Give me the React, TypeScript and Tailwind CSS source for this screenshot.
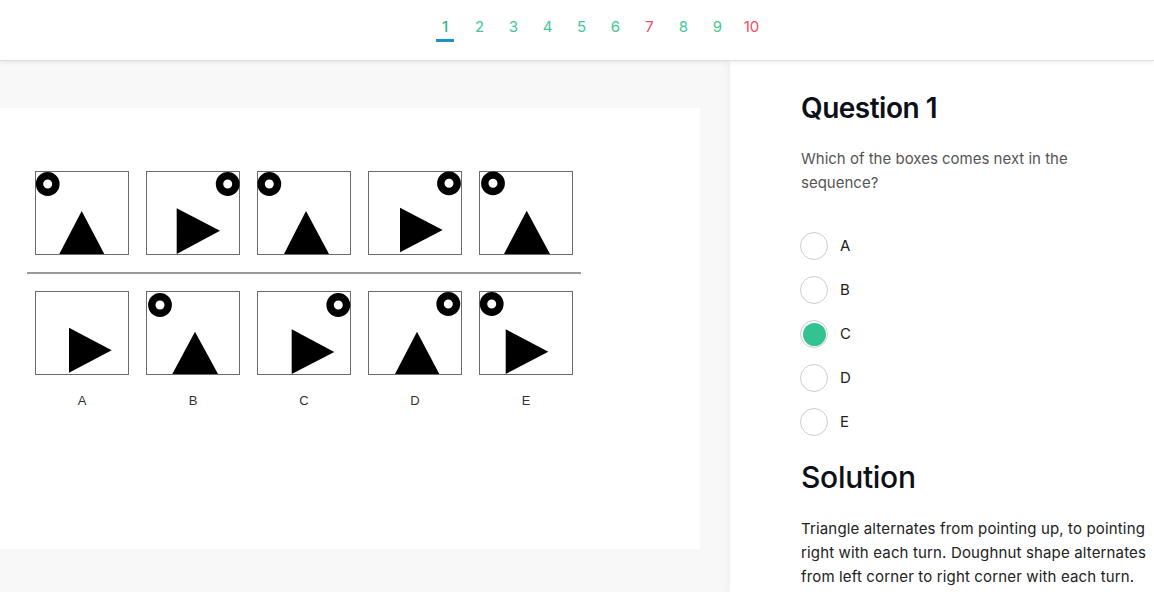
import React from 'react';

type Cell = {
    label?: string;
    donut?: [number, number];
    tri: number[][];
};

const topRow: Cell[] = [
    { donut: [12.7, 13], tri: [[46.7, 40], [69.3, 83], [24.3, 83]] },
    { donut: [81.7, 13], tri: [[30.7, 37.3], [74, 59.7], [30.7, 83]] },
    { donut: [12.3, 13], tri: [[49, 40], [72, 83], [27, 83]] },
    { donut: [81, 12.3], tri: [[32, 36.7], [74.7, 59], [32, 81.3]] },
    { donut: [14, 12.3], tri: [[47.7, 39.7], [71, 83], [25, 83]] },
];

const answers: Cell[] = [
    { label: 'A', tri: [[34, 36.7], [76.7, 59.3], [34, 81.7]] },
    { label: 'B', donut: [14, 14], tri: [[49, 40.7], [72, 83], [26.3, 83]] },
    { label: 'C', donut: [81.3, 14], tri: [[34.7, 38.3], [77.3, 61], [34.7, 83]] },
    { label: 'D', donut: [80.3, 13], tri: [[49, 40.7], [71.3, 83], [27, 83]] },
    { label: 'E', donut: [12.7, 13], tri: [[26.7, 38.3], [69.3, 60.7], [26.7, 83]] },
];

const pages = [
    { n: 1, red: false },
    { n: 2, red: false },
    { n: 3, red: false },
    { n: 4, red: false },
    { n: 5, red: false },
    { n: 6, red: false },
    { n: 7, red: true },
    { n: 8, red: false },
    { n: 9, red: false },
    { n: 10, red: true },
];

function Box({ cell }: { cell: Cell }) {
    return (
        <svg width={94} height={84} viewBox="0 0 94 84" className="block overflow-visible">
            <rect x={0.5} y={0.5} width={93} height={83} fill="#fff" stroke="#6b6b6b" strokeWidth={1} />
            <polygon points={cell.tri.map((p) => p.join(',')).join(' ')} fill="#000" />
            {cell.donut && (
                <circle cx={cell.donut[0]} cy={cell.donut[1]} r={8.2} fill="#fff" stroke="#000" strokeWidth={7.4} />
            )}
        </svg>
    );
}

export default function App() {
    const selected = 'C';

    return (
        <div className="w-[1154px] h-[592px] overflow-hidden bg-white font-['Inter',sans-serif]">
            {/* top nav with question numbers */}
            <header className="h-[61px] bg-white border-b border-[#dedede] shadow-[0_2px_4px_rgba(0,0,0,0.06)] relative z-10 flex justify-center">
                <nav className="flex items-start gap-[17px] pt-[17px] pl-[42px]">
                    {pages.map((p) => (
                        <div key={p.n} className="flex flex-col items-center min-w-[17px]">
                            <span
                                className={`text-[15px] leading-[20px] ${p.red ? 'text-[#ec4f5d]' : p.n === 1 ? 'text-[#33b58a] font-medium' : 'text-[#3fc796]'}`}
                            >
                                {p.n}
                            </span>
                            {p.n === 1 && <span className="mt-[2px] w-[18px] h-[3px] bg-[#1f8fc4]" />}
                        </div>
                    ))}
                </nav>
            </header>

            <div className="flex h-[531px]">
                {/* puzzle area */}
                <div className="w-[730px] shrink-0 bg-[#f8f8f8] pt-[47px] pr-[30px]">
                    <div className="bg-white h-[441px] pt-[63px] pl-[35px]">
                        <div className="flex gap-[17px]">
                            {topRow.map((c, i) => (
                                <Box key={i} cell={c} />
                            ))}
                        </div>
                        <div className="ml-[-8px] mt-[17px] w-[554px] h-[2px] bg-[#9a9a9a]" />
                        <div className="flex gap-[17px] mt-[17px]">
                            {answers.map((c) => (
                                <div key={c.label} className="flex flex-col items-center">
                                    <Box cell={c} />
                                    <span className="mt-[18px] text-[13px] leading-[15px] text-[#333] font-['Liberation_Sans',sans-serif]">
                                        {c.label}
                                    </span>
                                </div>
                            ))}
                        </div>
                    </div>
                </div>

                {/* question side */}
                <div className="flex-1 min-w-0 bg-white pl-[70px] pt-[30px] shadow-[-4px_0_6px_rgba(0,0,0,0.03)]">
                    <h1 className="pl-[1px] text-[28px] leading-[34px] font-semibold tracking-[-0.5px] text-[#0d1018]">Question 1</h1>
                    <p className="pl-[1px] mt-[22px] w-[290px] text-[15px] leading-[24px] text-[#555]">
                        Which of the boxes comes next in the sequence?
                    </p>
                    <div className="mt-[37px] flex flex-col gap-[16px]">
                        {['A', 'B', 'C', 'D', 'E'].map((l) => (
                            <label key={l} className="flex items-center gap-[12px]">
                                <span className="w-[28px] h-[28px] rounded-full border border-[#cccccc] bg-white flex items-center justify-center">
                                    {l === selected && <span className="w-[23px] h-[23px] rounded-full bg-[#33c391]" />}
                                </span>
                                <span className="text-[15px] text-[#222]">{l}</span>
                            </label>
                        ))}
                    </div>
                    <h2 className="pl-[1px] mt-[23px] text-[30px] leading-[36px] font-medium tracking-[-0.3px] text-[#0d1018]">Solution</h2>
                    <p className="pl-[1px] mt-[22px] w-[360px] text-[15px] leading-[24px] tracking-[0.15px] text-[#222]">
                        Triangle alternates from pointing up, to pointing right with each turn. Doughnut shape alternates from left corner to right corner with each turn.
                    </p>
                </div>
            </div>
        </div>
    );
}
